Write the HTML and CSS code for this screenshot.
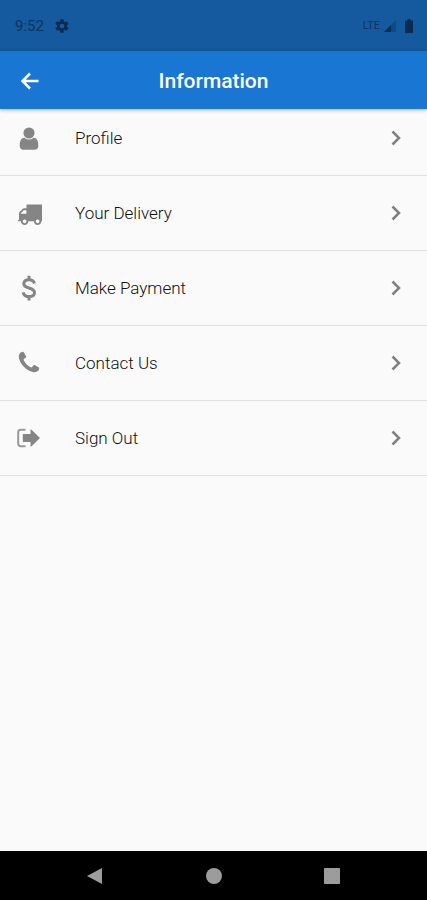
FILE: index.html
```
<!DOCTYPE html>
<html lang="en">
<head>
<meta charset="utf-8">
<meta name="viewport" content="width=device-width, initial-scale=1">
<title>Information</title>
<link rel="stylesheet" href="styles.css">
</head>
<body>
<div class="status">
  <span class="time">9:52</span>
  <svg class="gear" viewBox="0 0 24 24" width="16" height="16" aria-hidden="true"><path fill-rule="evenodd" d="M19.4 13a7.500 7.500 0 0 0 0-2l2.100-1.600a.5.5 0 0 0 .1-.7l-2-3.400a.5.5 0 0 0-.6-.2l-2.500 1a7.300 7.300 0 0 0-1.700-1l-.4-2.600a.5.5 0 0 0-.5-.5h-4a.5.5 0 0 0-.5.5L9 5.100a7.700 7.700 0 0 0-1.700 1l-2.500-1a.5.5 0 0 0-.6.2l-2 3.400a.5.5 0 0 0 .1.700L4.500 11a8 8 0 0 0 0 2l-2.200 1.600a.5.5 0 0 0-.1.700l2 3.400c.1.200.4.300.6.200l2.500-1c.5.400 1.100.8 1.700 1l.4 2.600c0 .3.200.5.500.5h4c.3 0 .5-.2.500-.5l.4-2.600a7.300 7.300 0 0 0 1.700-1l2.500 1c.2.100.5 0 .6-.2l2-3.400a.5.5 0 0 0-.1-.7zM12 15.500a3.500 3.500 0 1 1 0-7 3.500 3.500 0 0 1 0 7z"/></svg>
  <span class="network">LTE</span>
  <svg class="signal" viewBox="0 0 14 14" width="14" height="14" aria-hidden="true"><path opacity=".35" d="M13 1v12H1z"/><path d="M8 6v7H1z"/></svg>
  <svg class="battery" viewBox="0 0 8 14" width="8" height="14" aria-hidden="true"><path d="M2.500 0h3v1.500H8V14H0V1.500h2.500z"/></svg>
</div>
<header class="bar">
  <button class="back" type="button" aria-label="Back"><svg viewBox="0 0 24 24" width="24" height="24"><path d="M20.500 12H5M12 4.500 4.500 12l7.500 7.500"/></svg></button>
  <h1 class="title">Information</h1>
</header>
<main class="content">
  <nav class="menu">
    <a class="row" href="#profile">
      <svg class="icon" viewBox="0 -40 1792 1792" width="26" height="26"><path d="M1536 1399q0 109-62.500 187t-150.500 78h-854q-88 0-150.500-78t-62.500-187q0-85 8.500-160.500t31.500-152 58.500-131 94-89 134.500-34.500q131 128 313 128t313-128q76 0 134.500 34.500t94 89 58.500 131 31.500 152 8.500 160.500zm-256-887q0 159-112.500 271.500t-271.500 112.500-271.500-112.500-112.500-271.500 112.500-271.500 271.500-112.500 271.500 112.500 112.500 271.500z"/></svg>
      <span class="label">Profile</span>
      <svg class="chevron" viewBox="0 0 10 16" width="10" height="16"><path d="m1.500 1.500 6.500 6.500-6.500 6.500"/></svg>
    </a>
    <a class="row" href="#delivery">
      <svg class="icon" viewBox="-80 -60 1792 1792" width="26" height="26"><path d="M640 1408q0-52-38-90t-90-38-90 38-38 90 38 90 90 38 90-38 38-90zm-384-512h384v-256h-158q-13 0-22 9l-195 195q-9 9-9 22v30zm1280 512q0-52-38-90t-90-38-90 38-38 90 38 90 90 38 90-38 38-90zm256-1088v1024q0 15-4 26.500t-13.500 18.500-16.500 11.500-23.500 6-22.500 2-25.500 0-22.500-.5q0 106-75 181t-181 75-181-75-75-181h-384q0 106-75 181t-181 75-181-75-75-181h-64q-3 0-22.500.5t-25.500 0-22.500-2-23.500-6-16.500-11.500-13.500-18.500-4-26.500q0-26 19-45t45-19v-320q0-8-.5-35t0-38 2.500-34.500 6.500-37 14-30.500 22.500-30l198-198q19-19 50.500-32t58.500-13h160v-192q0-26 19-45t45-19h1024q26 0 45 19t19 45z"/></svg>
      <span class="label">Your Delivery</span>
      <svg class="chevron" viewBox="0 0 10 16" width="10" height="16"><path d="m1.500 1.500 6.500 6.500-6.500 6.500"/></svg>
    </a>
    <a class="row" href="#payment">
      <svg class="icon line" viewBox="0 0 26 26" width="26" height="26"><path d="M18.500 8.500C17.800 6 15.800 4.700 13 4.700c-3 0-5.200 1.500-5.200 4 0 2.700 2.400 3.500 5.200 4.300s5.500 1.700 5.500 4.500c0 2.500-2.200 4.100-5.500 4.100-3.200 0-5.300-1.600-5.900-4.300M13 .7v4M13 21.600v4"/></svg>
      <span class="label">Make Payment</span>
      <svg class="chevron" viewBox="0 0 10 16" width="10" height="16"><path d="m1.500 1.500 6.500 6.500-6.500 6.500"/></svg>
    </a>
    <a class="row" href="#contact">
      <svg class="icon" viewBox="0 0 1792 1792" width="26" height="26"><path d="M1600 1240q0 27-10 70.500t-21 68.500q-21 50-122 106-94 51-186 51-27 0-53-3.500t-57.500-12.500-47-14.500-55.500-20.500-49-18q-98-35-175-83-127-79-264-216t-216-264q-48-77-83-175-3-9-18-49t-20.500-55.500-14.500-47-12.500-57.500-3.500-53q0-92 51-186 56-101 106-122 25-11 68.500-21t70.500-10q14 0 21 3 18 6 53 76 11 19 30 54t35 63.500 31 53.500q3 4 17.500 25t21.500 35.500 7 28.500q0 20-28.500 50t-62 55-62 53-28.500 46q0 9 5 22.500t8.500 20.500 14 24 11.500 19q76 137 174 235t235 174q2 1 19 11.500t24 14 20.500 8.500 22.500 5q18 0 46-28.500t53-62 55-62 50-28.500q14 0 28.500 7t35.500 21.500 25 17.500q25 15 53.500 31t63.500 35 54 30q70 35 76 53 3 7 3 21z"/></svg>
      <span class="label">Contact Us</span>
      <svg class="chevron" viewBox="0 0 10 16" width="10" height="16"><path d="m1.500 1.500 6.500 6.500-6.500 6.500"/></svg>
    </a>
    <a class="row" href="#signout">
      <svg class="icon" viewBox="0 0 26 26" width="26" height="26"><path class="door" d="M9.500 4.800H4.800Q2.200 4.800 2.200 7.500v11q0 2.700 2.600 2.700h4.700"/><path d="M7.500 9h7V4.800q.2-.6.8-.2l8.200 7.800q.6.600 0 1.200l-8.200 7.800q-.6.400-.8-.2V17h-7q-.7 0-.7-.7V9.700q0-.7.700-.7z"/></svg>
      <span class="label">Sign Out</span>
      <svg class="chevron" viewBox="0 0 10 16" width="10" height="16"><path d="m1.500 1.500 6.500 6.500-6.500 6.500"/></svg>
    </a>
  </nav>
</main>
<footer class="system">
  <button type="button" aria-label="System back"><svg viewBox="0 0 18 18" width="18" height="18"><path d="M16 1v16L1 9z"/></svg></button>
  <button type="button" aria-label="Home"><svg viewBox="0 0 18 18" width="18" height="18"><circle cx="9" cy="9" r="8"/></svg></button>
  <button type="button" aria-label="Recent apps"><svg viewBox="0 0 18 18" width="18" height="18"><rect x="1" y="1" width="16" height="16" rx="1"/></svg></button>
</footer>
</body>
</html>
```
FILE: styles.css
```
* { box-sizing: border-box; }
body {
  margin: 0;
  min-height: 100vh;
  display: flex;
  flex-direction: column;
  background: #fafafa;
  font-family: Roboto, "Liberation Sans", sans-serif;
}
svg { display: block; flex: none; }
button {
  padding: 0;
  border: 0;
  background: none;
}
.status {
  display: flex;
  align-items: center;
  height: 51px;
  padding: 0 14px 0 15px;
  background: #155a9e;
  color: #0c3560;
  fill: #0a2c50;
}
.time { font-size: 15px; }
.gear { margin-left: 10px; }
.network {
  margin-left: auto;
  font-size: 11px;
}
.signal { margin-left: 3px; }
.battery { margin-left: 8px; }
.bar {
  position: relative;
  z-index: 1;
  display: grid;
  grid-template-columns: 24px 1fr 24px;
  align-items: center;
  height: 58px;
  padding: 2px 18px 0;
  background: #1976d2;
  box-shadow: 0 1px 4px rgba(0, 0, 0, 0.3);
}
.back svg {
  fill: none;
  stroke: #fff;
  stroke-width: 2.500;
}
.title {
  margin: 0;
  color: #fff;
  font-size: 21px;
  font-weight: 500;
  line-height: 24px;
  text-align: center;
}
.content { flex: 1; }
.menu { margin-top: -8px; }
.row {
  display: flex;
  align-items: center;
  height: 75px;
  padding: 0 26px 0 16px;
  border-bottom: 1px solid #e0e0e0;
  color: #111;
  text-decoration: none;
}
.icon { fill: #858585; }
.line {
  fill: none;
  stroke: #858585;
  stroke-width: 3;
}
.door {
  fill: none;
  stroke: #9a9a9a;
  stroke-width: 2;
}
.label {
  flex: 1;
  margin-left: 33px;
  font-size: 17px;
  font-weight: 300;
  line-height: 24px;
}
.chevron {
  fill: none;
  stroke: #808080;
  stroke-width: 2.500;
}
.system {
  display: flex;
  align-items: center;
  justify-content: space-between;
  height: 49px;
  padding: 0 86px;
  background: #000;
  fill: #9c9c9c;
}
```
